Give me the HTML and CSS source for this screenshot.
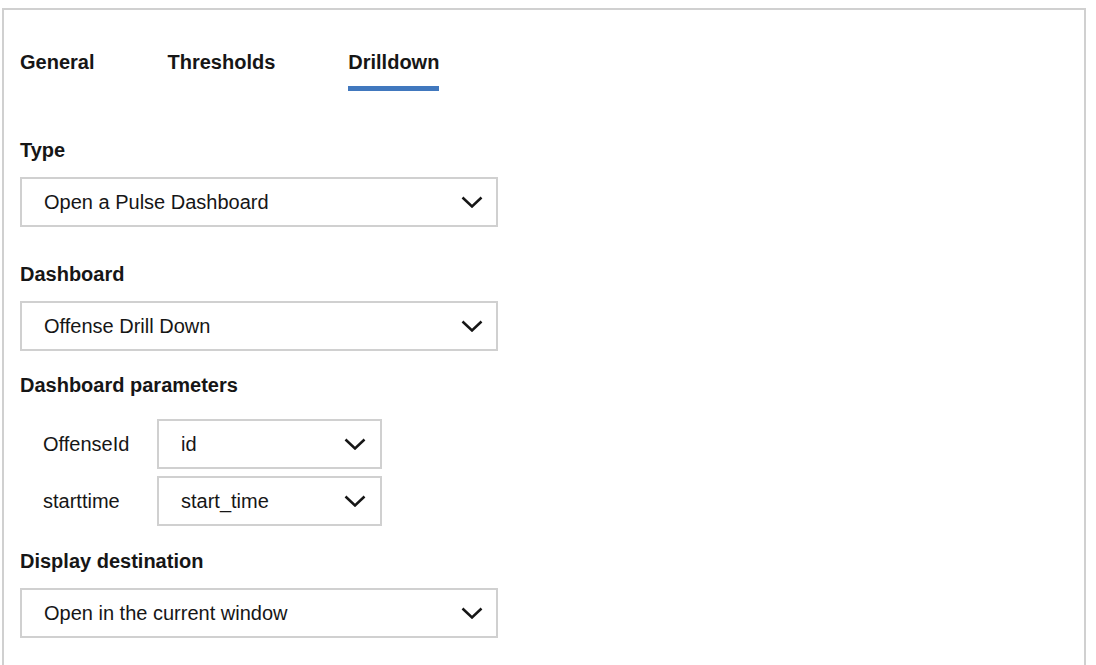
FILE: index.html
```html
<!DOCTYPE html>
<html>
<head>
<meta charset="utf-8">
<link rel="stylesheet" href="styles.css">
</head>
<body>
<div class="panel">
  <nav class="tabs">
    <div class="tab">General</div>
    <div class="tab">Thresholds</div>
    <div class="tab active">Drilldown</div>
  </nav>

  <div class="label first">Type</div>
  <div class="select">
    <span>Open a Pulse Dashboard</span>
    <svg class="chev" viewBox="0 0 22 12" width="22" height="12"><polyline points="1.5,1.5 11,10.5 20.5,1.5"/></svg>
  </div>

  <div class="label">Dashboard</div>
  <div class="select">
    <span>Offense Drill Down</span>
    <svg class="chev" viewBox="0 0 22 12" width="22" height="12"><polyline points="1.5,1.5 11,10.5 20.5,1.5"/></svg>
  </div>

  <div class="label params-label">Dashboard parameters</div>
  <div class="params">
    <div class="param-name">OffenseId</div>
    <div class="select small">
      <span>id</span>
      <svg class="chev" viewBox="0 0 22 12" width="22" height="12"><polyline points="1.5,1.5 11,10.5 20.5,1.5"/></svg>
    </div>
    <div class="param-name">starttime</div>
    <div class="select small">
      <span>start_time</span>
      <svg class="chev" viewBox="0 0 22 12" width="22" height="12"><polyline points="1.5,1.5 11,10.5 20.5,1.5"/></svg>
    </div>
  </div>

  <div class="label dest-label">Display destination</div>
  <div class="select">
    <span>Open in the current window</span>
    <svg class="chev" viewBox="0 0 22 12" width="22" height="12"><polyline points="1.5,1.5 11,10.5 20.5,1.5"/></svg>
  </div>
</div>
</body>
</html>
```
FILE: styles.css
```css
html, body {
  margin: 0;
  padding: 0;
  background: #ffffff;
  overflow: hidden;
}
body {
  padding: 8px 0 0 2px;
  font-family: "Liberation Sans", Arial, sans-serif;
  color: #161616;
}
.panel {
  width: 1048px;
  height: 615px;
  border: 2px solid #d0d0d0;
  border-bottom: none;
  padding: 40px 16px 0 16px;
  box-sizing: content-box;
}
.tabs {
  display: flex;
  gap: 73px;
}
.tab {
  font-size: 20px;
  font-weight: 700;
  line-height: 24px;
  padding-bottom: 12px;
  border-bottom: 5px solid transparent;
}
.tab.active {
  border-bottom-color: #4178be;
}
.label {
  font-size: 20px;
  font-weight: 700;
  line-height: 24px;
  margin-top: 35px;
  margin-bottom: 15px;
}
.label.first {
  margin-top: 47px;
}
.label.params-label {
  margin-top: 22px;
  margin-bottom: 22px;
}
.label.dest-label {
  margin-top: 23px;
}
.select {
  width: 478px;
  height: 50px;
  box-sizing: border-box;
  border: 2px solid #d0d0d0;
  display: flex;
  align-items: center;
  justify-content: space-between;
  padding: 0 13px 0 22px;
  font-size: 20px;
}
.select.small {
  width: 225px;
  padding-right: 14px;
}
.chev {
  display: block;
}
.chev polyline {
  fill: none;
  stroke: #161616;
  stroke-width: 2.5;
}
.params {
  display: grid;
  grid-template-columns: 114px 225px;
  row-gap: 7px;
  padding-left: 23px;
}
.param-name {
  font-size: 20px;
  display: flex;
  align-items: center;
}
```
